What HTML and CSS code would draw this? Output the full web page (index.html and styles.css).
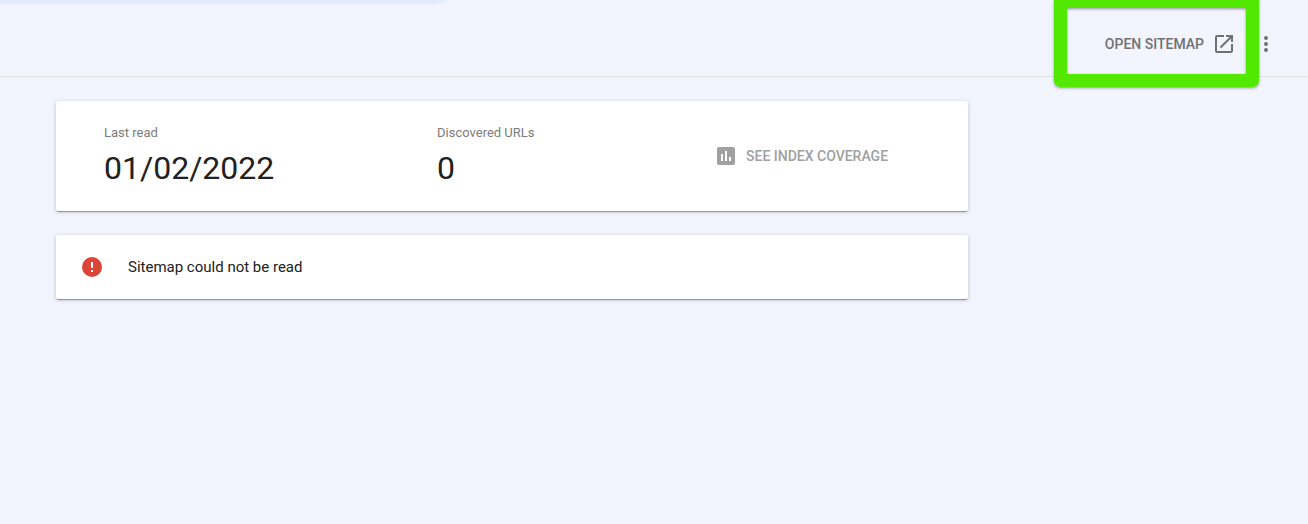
FILE: index.html
```
<!DOCTYPE html>
<html lang="en">
<head>
<meta charset="utf-8">
<meta name="viewport" content="width=device-width, initial-scale=1">
<title>Sitemap details</title>
<link rel="stylesheet" href="styles.css">
</head>
<body>
<header class="toolbar">
  <div class="search-edge"></div>
  <div class="actions">
    <a class="open-link" href="#sitemap">Open sitemap
      <svg class="icon" viewBox="0 0 24 24" aria-hidden="true"><path d="M19 19H5V5h7V3H5a2 2 0 0 0-2 2v14a2 2 0 0 0 2 2h14c1.1 0 2-.9 2-2v-7h-2v7zM14 3v2h3.590l-9.830 9.830 1.410 1.410L19 6.410V10h2V3h-7z"/></svg>
      <span class="highlight"></span>
    </a>
    <button class="more" type="button" aria-label="More options">
      <svg class="icon" viewBox="0 0 24 24" aria-hidden="true"><path d="M12 8a2 2 0 1 0 0-4 2 2 0 0 0 0 4zm0 2a2 2 0 1 0 0 4 2 2 0 0 0 0-4zm0 6a2 2 0 1 0 0 4 2 2 0 0 0 0-4z"/></svg>
    </button>
  </div>
</header>
<main class="content">
  <section class="card summary">
    <dl class="stat">
      <dt>Last read</dt>
      <dd>01/02/2022</dd>
    </dl>
    <dl class="stat">
      <dt>Discovered URLs</dt>
      <dd>0</dd>
    </dl>
    <button class="coverage" type="button" disabled>
      <svg class="icon" viewBox="0 0 24 24" aria-hidden="true"><path d="M19 3H5a2 2 0 0 0-2 2v14a2 2 0 0 0 2 2h14a2 2 0 0 0 2-2V5a2 2 0 0 0-2-2zM9 17H7v-7h2v7zm4 0h-2V7h2v10zm4 0h-2v-4h2v4z"/></svg>
      See index coverage
    </button>
  </section>
  <section class="card status">
    <svg class="icon error" viewBox="0 0 24 24" aria-hidden="true"><path d="M12 2a10 10 0 1 0 0 20 10 10 0 0 0 0-20zm1 15h-2v-2h2v2zm0-4h-2V7h2v6z"/></svg>
    <p>Sitemap could not be read</p>
  </section>
</main>
</body>
</html>
```
FILE: styles.css
```
* {
  box-sizing: border-box;
}

body {
  margin: 0;
  background: #f2f5fd;
  color: #212121;
  font-family: Roboto, Arial, sans-serif;
}

.icon {
  width: 24px;
  height: 24px;
  flex: none;
  fill: currentColor;
}

.toolbar {
  height: 77px;
  border-bottom: 1px solid #e0e2e4;
}

.search-edge {
  width: 446px;
  max-width: 50%;
  height: 4px;
  background: #e2eafd;
  border-radius: 0 0 14px 0 / 0 0 4px 0;
}

.actions {
  display: flex;
  justify-content: flex-end;
  align-items: center;
  gap: 18px;
  height: 80px;
  padding-right: 30px;
}

.open-link,
.coverage {
  display: flex;
  align-items: center;
  font-size: 14px;
  font-weight: 500;
  line-height: 24px;
  text-transform: uppercase;
}

.open-link {
  position: relative;
  gap: 8px;
  color: #717174;
  text-decoration: none;
}

.highlight {
  position: absolute;
  inset: -37px -23px -31px -51px;
  border: 13px solid #52e800;
  border-radius: 6px;
  box-shadow: 0 1px 3px rgba(0, 0, 0, 0.4), inset 0 1px 3px rgba(0, 0, 0, 0.4);
  pointer-events: none;
}

.more {
  display: flex;
  padding: 0;
  border: 0;
  background: none;
  color: #717174;
}

.content {
  display: grid;
  gap: 24px;
  max-width: 1024px;
  padding: 24px 56px;
}

.card {
  display: flex;
  align-items: center;
  background: #fff;
  border-radius: 2px;
  box-shadow: 0 2px 1px -1px rgba(0, 0, 0, 0.2), 0 1px 1px rgba(0, 0, 0, 0.14), 0 1px 4px rgba(0, 0, 0, 0.2);
}

.summary {
  display: grid;
  grid-template-columns: 333px 277px auto;
  justify-content: start;
  padding: 23px 48px;
}

.stat {
  margin: 0;
}

.stat dt {
  color: #7c7c7c;
  font-size: 13px;
  line-height: 18px;
}

.stat dd {
  margin: 6px 0 0;
  font-size: 32px;
  line-height: 40px;
}

.coverage {
  gap: 8px;
  padding: 0;
  border: 0;
  background: none;
  color: #a0a0a0;
  font-family: inherit;
}

.status {
  gap: 24px;
  padding: 20px 24px;
}

.status p {
  margin: 0;
  font-size: 15px;
  line-height: 24px;
}

.error {
  color: #db4437;
}
```
